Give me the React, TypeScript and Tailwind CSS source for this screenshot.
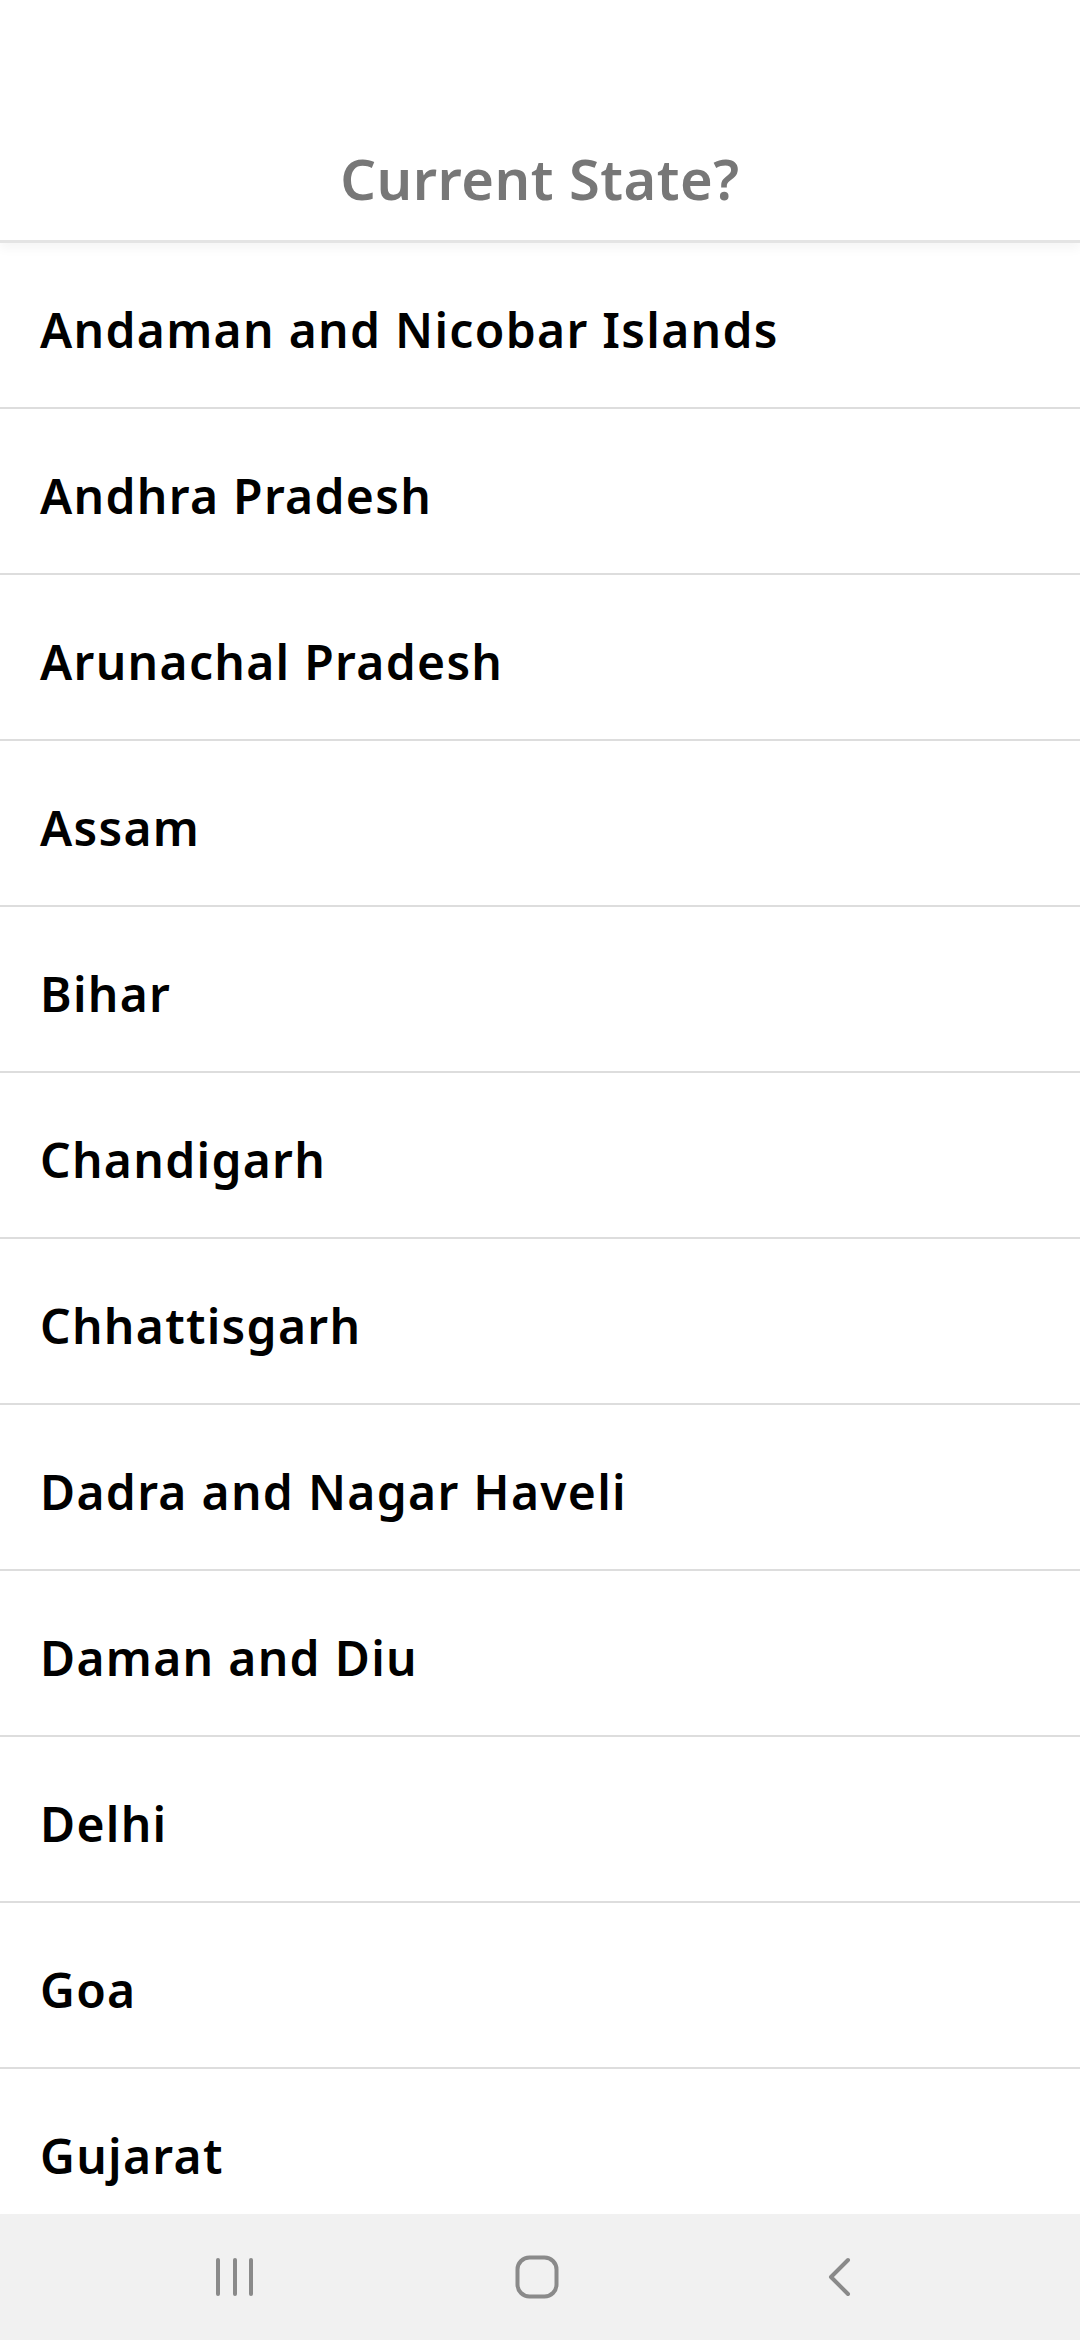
const STATES = [
  'Andaman and Nicobar Islands',
  'Andhra Pradesh',
  'Arunachal Pradesh',
  'Assam',
  'Bihar',
  'Chandigarh',
  'Chhattisgarh',
  'Dadra and Nagar Haveli',
  'Daman and Diu',
  'Delhi',
  'Goa',
  'Gujarat',
];

const NavBar = () => (
  <div className="flex h-[126px] shrink-0 items-center justify-center gap-[258px] bg-[#f1f1f1] pr-[6px]">
    <svg width="44" height="44" viewBox="0 0 44 44">
      <g stroke="#8a8a8a" strokeWidth="4" strokeLinecap="round">
        <line x1="5" y1="5" x2="5" y2="39" />
        <line x1="22" y1="5" x2="22" y2="39" />
        <line x1="38" y1="5" x2="38" y2="39" />
      </g>
    </svg>
    <svg width="44" height="44" viewBox="0 0 44 44">
      <rect x="2.5" y="2.5" width="39" height="39" rx="12" fill="none" stroke="#8a8a8a" strokeWidth="4" />
    </svg>
    <svg width="44" height="44" viewBox="0 0 44 44">
      <polyline
        points="31,5 14,22 31,39"
        fill="none"
        stroke="#8a8a8a"
        strokeWidth="4"
        strokeLinecap="round"
        strokeLinejoin="round"
      />
    </svg>
  </div>
);

export default function App() {
  return (
    <div
      className="flex h-[2340px] w-[1080px] flex-col overflow-hidden bg-white"
      style={{ fontFamily: '"Noto Sans", sans-serif' }}
    >
      <header className="relative z-10 flex h-[243px] shrink-0 items-end justify-center border-b-[3px] border-[#e4e4e4] bg-white pb-[34px] shadow-[0_6px_10px_rgba(0,0,0,0.04)]">
        <h1 className="text-[56px] font-semibold leading-none tracking-[0.5px] text-[#777777]">
          Current State?
        </h1>
      </header>
      <ul className="flex-1 overflow-hidden">
        {STATES.map((s) => (
          <li
            key={s}
            className="flex h-[166px] items-center border-b-2 border-[#dddddd] pl-[40px] pt-[10px] text-[48px] font-semibold tracking-[1.3px] text-black"
          >
            {s}
          </li>
        ))}
      </ul>
      <NavBar />
    </div>
  );
}
